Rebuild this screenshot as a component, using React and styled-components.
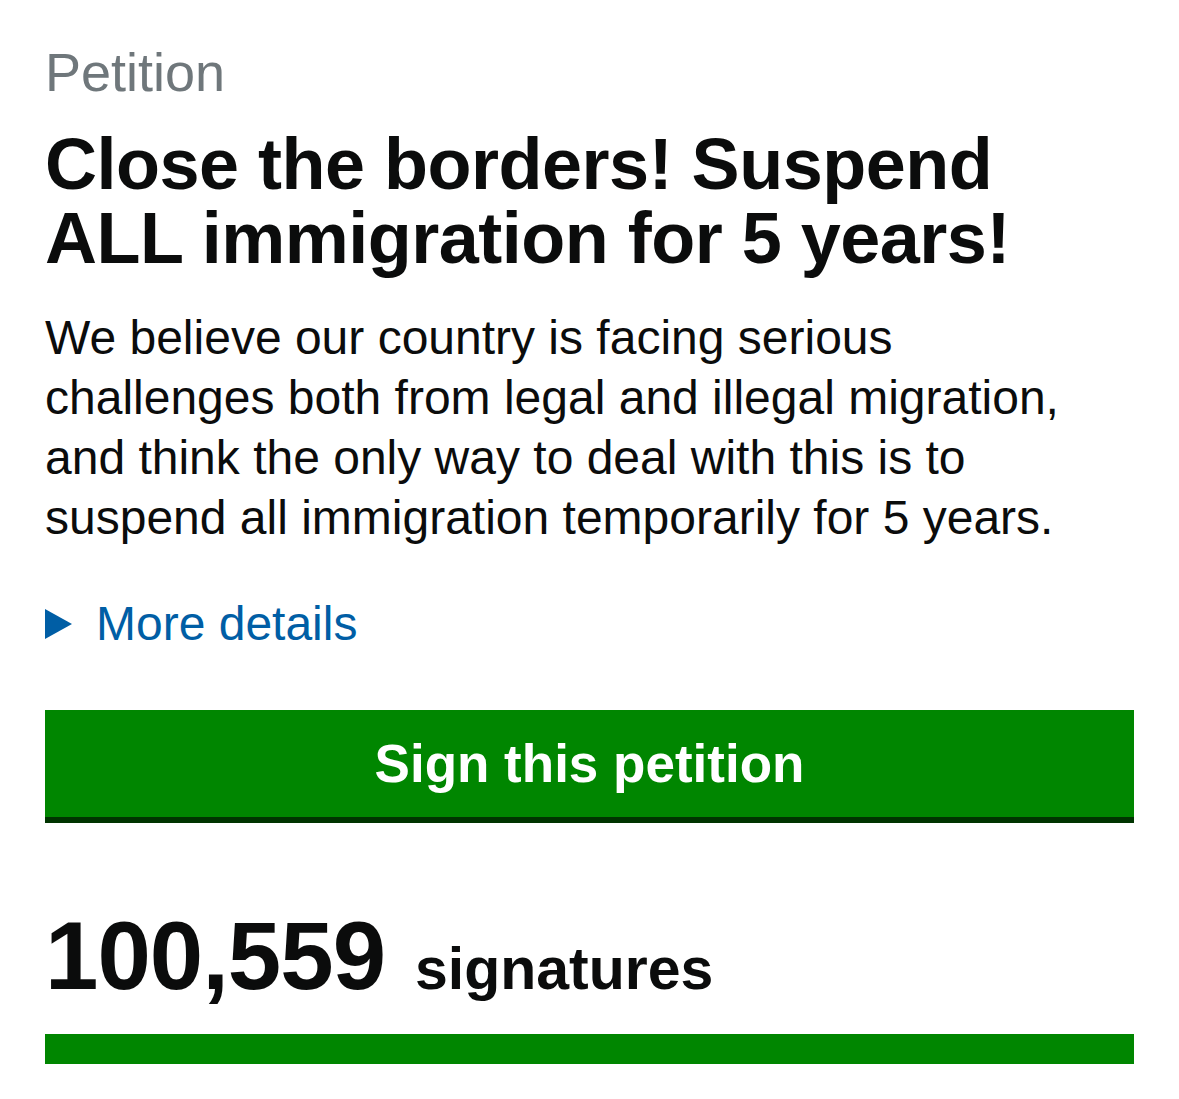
import React from "react";
import styled, { createGlobalStyle } from "styled-components";

const Global = createGlobalStyle`
  html, body { margin: 0; padding: 0; background: #ffffff; }
  body { font-family: "Liberation Sans", Arial, Helvetica, sans-serif; color: #0b0c0c; }
`;

const Page = styled.main`
  padding: 0 45px;
  width: 1179px;
  box-sizing: border-box;
`;

const Caption = styled.span`
  display: block;
  font-size: 54px;
  line-height: 60px;
  color: #6f777b;
  padding-top: 42px;
`;

const Title = styled.h1`
  margin: 25px 0 0;
  font-size: 72px;
  line-height: 74px;
  font-weight: 700;
  letter-spacing: -0.5px;
`;

const Summary = styled.p`
  margin: 33px 0 0;
  font-size: 48px;
  line-height: 60px;
`;

const Details = styled.details`
  margin-top: 46px;
`;

const DetailsSummary = styled.summary`
  display: flex;
  align-items: center;
  gap: 24px;
  list-style: none;
  color: #005ea5;
  font-size: 48px;
  line-height: 60px;
  cursor: pointer;
  &::-webkit-details-marker { display: none; }
`;

const Arrow = styled.span`
  width: 0;
  height: 0;
  border-top: 15px solid transparent;
  border-bottom: 15px solid transparent;
  border-left: 27px solid #005ea5;
`;

const SignButton = styled.a`
  display: flex;
  align-items: center;
  justify-content: center;
  margin-top: 56px;
  height: 107px;
  background: #008600;
  box-shadow: 0 6px 0 #003400;
  color: #ffffff;
  font-size: 53px;
  font-weight: 700;
  text-decoration: none;
`;

const Count = styled.p`
  display: flex;
  align-items: baseline;
  gap: 30px;
  margin: 89px 0 0;
  line-height: 100px;
`;

const Number = styled.span`
  font-size: 96px;
  font-weight: 700;
  letter-spacing: -1px;
`;

const Unit = styled.span`
  font-size: 59px;
  font-weight: 700;
`;

const Progress = styled.div`
  margin-top: 15px;
  height: 30px;
  background: #e6e6e6;
`;

const ProgressFill = styled.div`
  height: 100%;
  background: #008600;
`;

export default function App() {
  const signatures = 100559;
  const target = 100000;
  const pct = Math.min(100, (signatures / target) * 100);
  return (
    <>
      <Global />
      <Page>
        <Caption>Petition</Caption>
        <Title>Close the borders! Suspend ALL immigration for 5 years!</Title>
        <Summary>
          We believe our country is facing serious challenges both from legal and illegal
          migration, and think the only way to deal with this is to suspend all immigration
          temporarily for 5 years.
        </Summary>
        <Details>
          <DetailsSummary>
            <Arrow />
            More details
          </DetailsSummary>
        </Details>
        <SignButton href="#">Sign this petition</SignButton>
        <Count>
          <Number>{signatures.toLocaleString("en-GB")}</Number>
          <Unit>signatures</Unit>
        </Count>
        <Progress>
          <ProgressFill style={{ width: `${pct}%` }} />
        </Progress>
      </Page>
    </>
  );
}
